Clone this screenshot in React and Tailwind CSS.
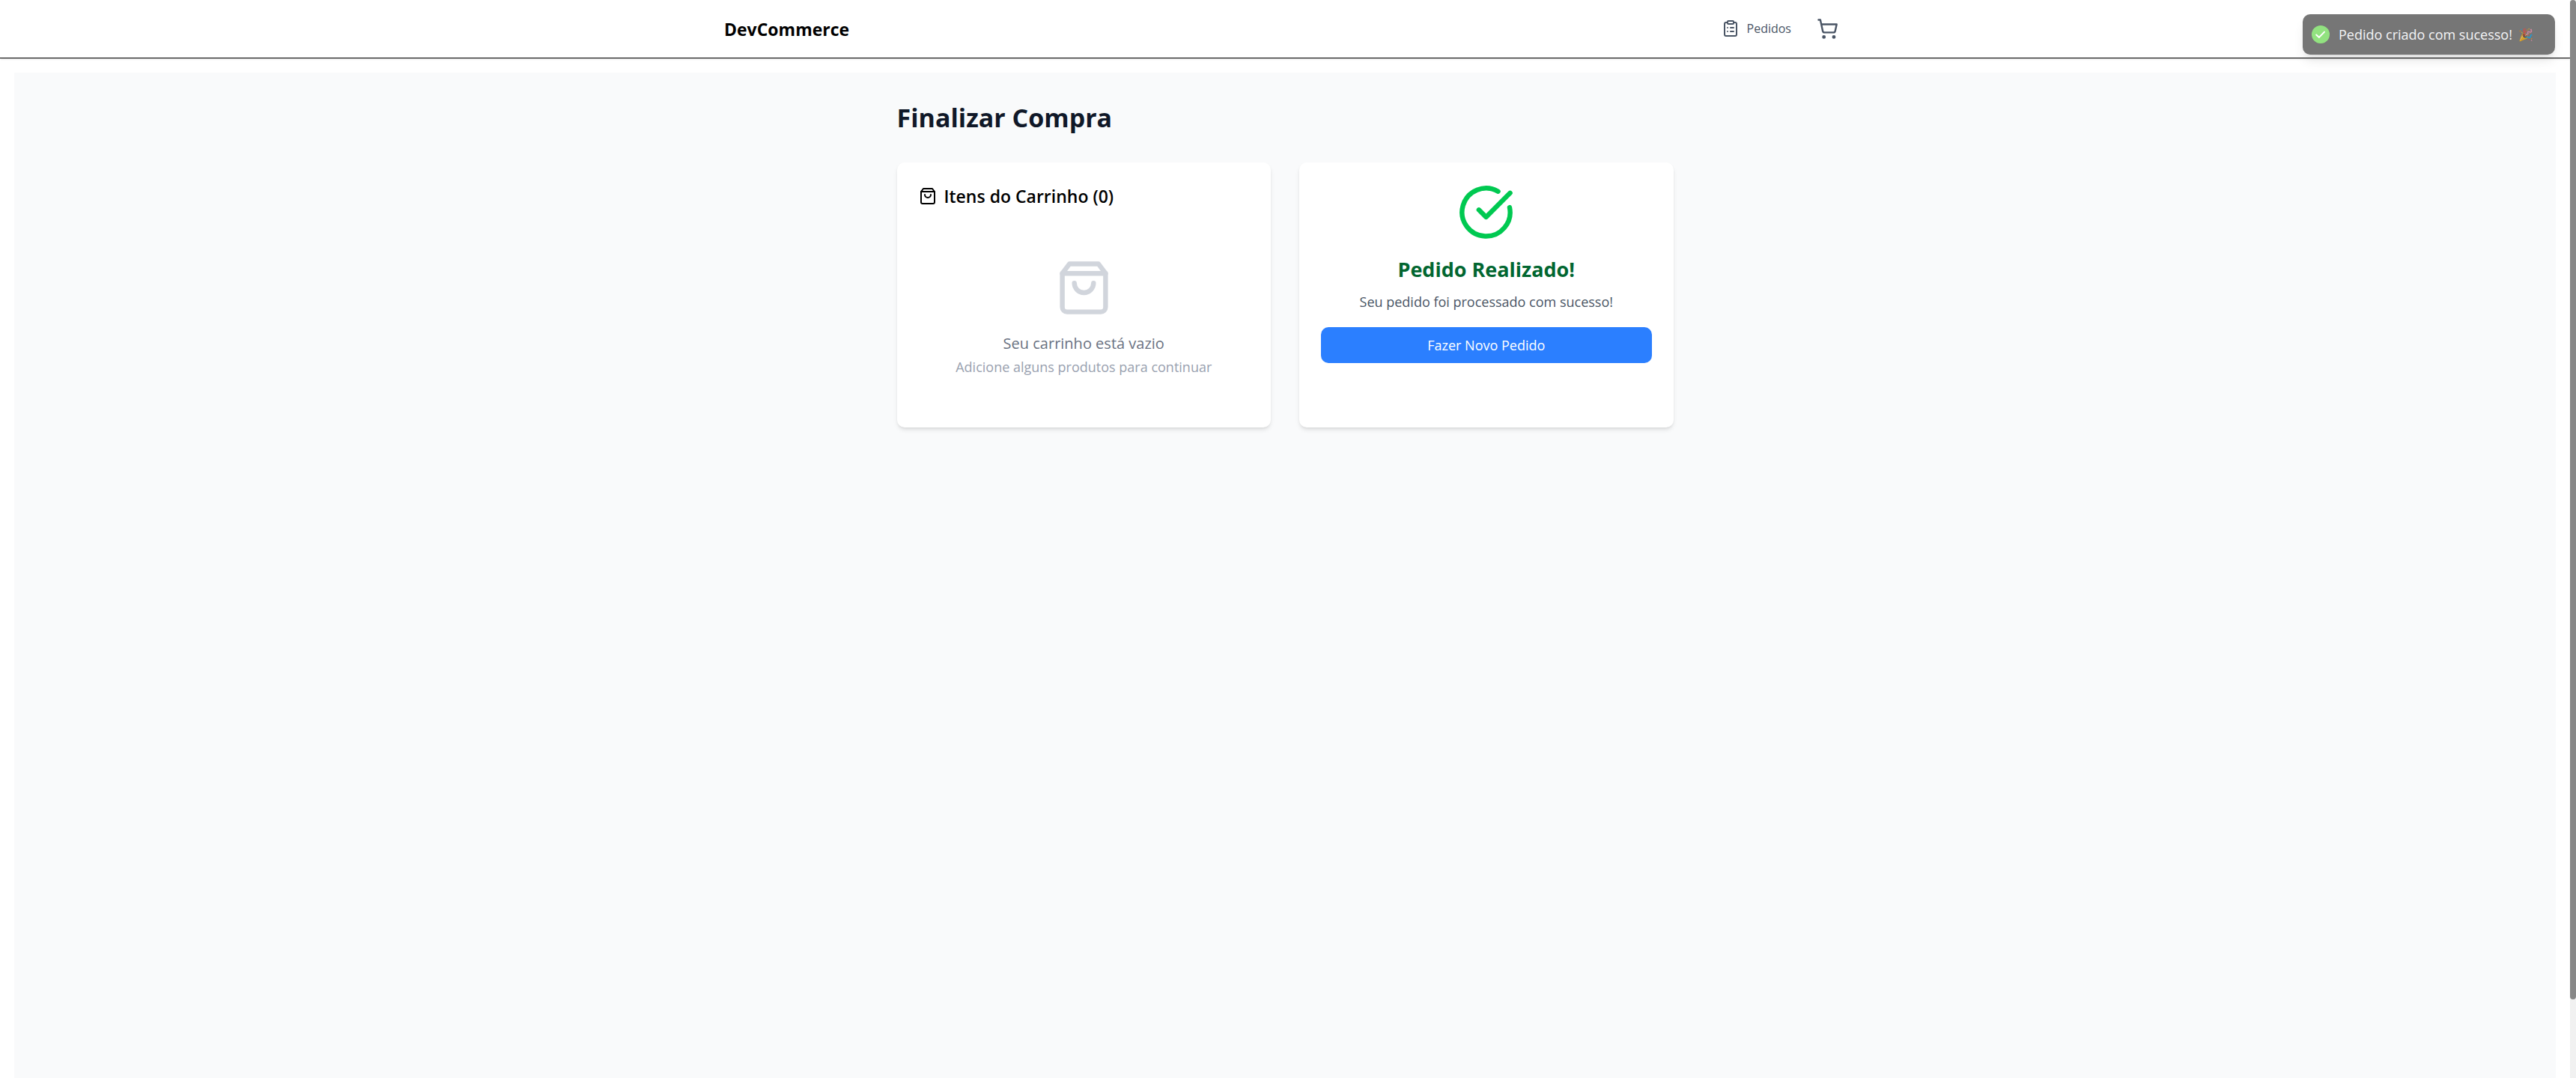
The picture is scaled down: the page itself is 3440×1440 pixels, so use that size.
import { CircleCheckBig, ClipboardList, ShoppingCart } from "lucide-react";

function BagIcon({ className }) {
  return (
    <svg
      viewBox="0 0 24 24"
      fill="none"
      stroke="currentColor"
      strokeWidth="2"
      strokeLinecap="round"
      strokeLinejoin="round"
      className={className}
      aria-hidden="true"
    >
      <path d="M6 2 3 6v14a2 2 0 0 0 2 2h14a2 2 0 0 0 2-2V6l-3-4Z" />
      <path d="M3 6h18" />
      <path d="M16 10a4 4 0 0 1-8 0" />
    </svg>
  );
}

function Header() {
  return (
    <header className="border-b border-black bg-white shadow-sm">
      <div className="mx-auto flex h-[77px] max-w-[1536px] items-center justify-between px-[19px]">
        <a href="#" className="text-[23px]/[34px] font-bold text-black">
          DevCommerce
        </a>
        <nav className="flex items-center gap-2.5 pb-px">
          <a href="#pedidos" className="flex items-center gap-2.5 px-3.5 text-base font-medium text-gray-600">
            <ClipboardList className="size-6" />
            Pedidos
          </a>
          <button type="button" aria-label="Carrinho" className="p-2.5 text-gray-600">
            <ShoppingCart className="size-[29px]" />
          </button>
        </nav>
      </div>
    </header>
  );
}

function CartCard() {
  return (
    <section className="rounded-[10px] bg-white px-[29px] py-7 shadow-md">
      <h2 className="mb-[29px] flex items-center gap-2.5 text-[23px]/[34px] font-semibold text-black">
        <BagIcon className="size-6" />
        Itens do Carrinho (0)
      </h2>
      <div className="flex flex-col items-center py-[38px]">
        <BagIcon className="mb-[19px] size-[77px] text-gray-300" />
        <p className="text-xl/[34px] text-gray-500">Seu carrinho está vazio</p>
        <p className="text-lg/[29px] text-gray-400">Adicione alguns produtos para continuar</p>
      </div>
    </section>
  );
}

function SuccessCard() {
  return (
    <section className="flex flex-col items-center rounded-[10px] bg-white px-[29px] py-7 shadow-md">
      <CircleCheckBig className="mb-[19px] size-[77px] text-green-500" />
      <h2 className="mb-2.5 text-[27px]/[38px] font-bold text-green-800">Pedido Realizado!</h2>
      <p className="mb-[19px] text-lg/[29px] text-gray-600">Seu pedido foi processado com sucesso!</p>
      <button type="button" className="w-full rounded-[10px] bg-[#2b7fff] py-2.5 text-lg/7 text-white">
        Fazer Novo Pedido
      </button>
    </section>
  );
}

function Toast() {
  return (
    <div
      role="status"
      className="absolute top-[19px] right-7 flex h-[54px] w-[337px] items-center gap-3 rounded-[10px] bg-[#767676] pl-3 text-lg text-gray-100 shadow-lg"
    >
      <svg viewBox="0 0 24 24" className="size-6" aria-hidden="true">
        <circle cx="12" cy="12" r="12" fill="#92e280" />
        <path d="M6.2 12.5 9.9 15.9 17 8.6" fill="none" stroke="#fff" strokeWidth="2" strokeLinecap="round" />
      </svg>
      <span className="flex items-center gap-2 whitespace-nowrap">
        Pedido criado com sucesso! <span className="text-base opacity-70">🎉</span>
      </span>
    </div>
  );
}

export default function App() {
  return (
    <div className="relative flex h-screen overflow-hidden bg-white font-['Open_Sans','Noto_Sans',sans-serif]">
      <div className="flex min-w-0 flex-1 flex-col">
        <Header />
        <main className="mx-[19px] mt-[19px] flex-1 bg-gray-50">
          <div className="mx-auto max-w-[1075px] px-[19px] py-[38px]">
            <h1 className="mb-[37px] text-[34px]/[45px] font-bold text-gray-900">Finalizar Compra</h1>
            <div className="grid grid-cols-2 gap-[38px]">
              <CartCard />
              <SuccessCard />
            </div>
          </div>
        </main>
      </div>
      <div className="w-2 bg-[#f1f1f1]">
        <div className="h-[92.7%] rounded-full bg-[#888]" />
      </div>
      <Toast />
    </div>
  );
}
